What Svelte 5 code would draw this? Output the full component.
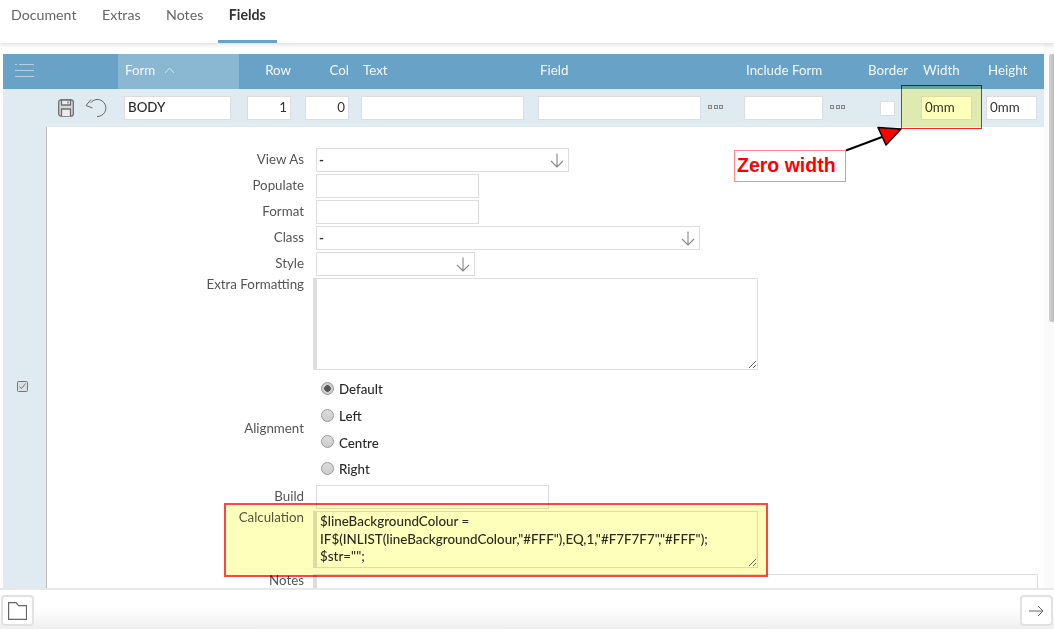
<script>
  const tabs = ['Document', 'Extras', 'Notes', 'Fields'];
  const radios = ['Default', 'Left', 'Centre', 'Right'];
</script>

<div class="page">
  <nav class="tabs">
    {#each tabs as t}
      <span class="tab" class:active={t === 'Fields'}>{t}</span>
    {/each}
  </nav>

  <main class="main">
    <div class="content">
      <div class="grid head">
        <div class="hcell menu">
          <svg width="19" height="13" viewBox="0 0 19 13" fill="none" stroke="#b5d0e3" stroke-width="1">
            <path d="M0 0.500h2M4 0.500h15M0 6.500h19M0 12.500h19" />
          </svg>
        </div>
        <div class="hcell sorted">Form
          <svg width="11" height="7" viewBox="0 0 11 7" fill="none" stroke="#d5e5ef" stroke-width="1"><path d="M1 6l4.500-5 4.500 5" /></svg>
        </div>
        <div class="hcell right">Row</div>
        <div class="hcell right">Col</div>
        <div class="hcell">Text</div>
        <div class="hcell">Field</div>
        <div class="hcell">Include Form</div>
        <div class="hcell">Border</div>
        <div class="hcell">Width</div>
        <div class="hcell">Height</div>
      </div>

      <div class="grid row">
        <div class="actions">
          <svg width="16" height="18" viewBox="0 0 16 18" fill="none" stroke="#6f6f6f" stroke-width="1.300">
            <rect x="0.700" y="1" width="14.600" height="16" rx="2" fill="#d4d9dc" />
            <path d="M3.500 1v5h9V1z" fill="#e8edf0" />
            <path d="M3.500 17v-7h9v7" fill="#e8edf0" />
            <path d="M10 2.500v2" />
          </svg>
          <svg width="22" height="20" viewBox="0 0 22 20" fill="none" stroke="#666" stroke-width="1">
            <path d="M5.500 5A8.500 8.500 0 1 1 12 18.500" />
            <path d="M6 1.500L1 7.500l6.500 2.500" />
          </svg>
        </div>
        <div class="cell"><input class="ctl strong" style="width:107px" value="BODY" /></div>
        <div class="cell"><input class="ctl num" value="1" /></div>
        <div class="cell"><input class="ctl num" value="0" /></div>
        <div class="cell"><input class="ctl" style="width:163px" /></div>
        <div class="cell"><input class="ctl" style="width:163px" /><span class="dots"><i></i><i></i><i></i></span></div>
        <div class="cell"><input class="ctl" style="width:79px" /><span class="dots"><i></i><i></i><i></i></span></div>
        <div class="cell checkcell"><span class="check"></span></div>
        <div class="cell"><input class="ctl mm" value="0mm" /></div>
        <div class="cell"><input class="ctl mm" value="0mm" /></div>
      </div>

      <div class="body">
        <aside class="side">
          <svg width="11" height="11" viewBox="0 0 11 11" fill="none" stroke="#777">
            <rect x="0.500" y="0.500" width="10" height="10" rx="1" fill="#d8e0e5" />
            <path d="M2.500 5.500l2 2 4-5" />
          </svg>
        </aside>
        <form class="form">
          <label class="lab">View As</label>
          <div class="sel" style="width:253px"><span>-</span>{@render arrow()}</div>

          <label class="lab">Populate</label>
          <input class="ctl" style="width:163px" />

          <label class="lab">Format</label>
          <input class="ctl" style="width:163px" />

          <label class="lab">Class</label>
          <div class="sel" style="width:384px"><span>-</span>{@render arrow()}</div>

          <label class="lab">Style</label>
          <div class="sel" style="width:159px"><span></span>{@render arrow()}</div>

          <label class="lab top">Extra Formatting</label>
          <textarea class="area extra"></textarea>

          <label class="lab align">Alignment</label>
          <div class="radios">
            {#each radios as r, i}
              <label class="radio"><input type="radio" name="al" checked={i === 0} />{r}</label>
            {/each}
          </div>

          <label class="lab">Build</label>
          <input class="ctl" style="width:233px" />

          <label class="lab top">Calculation</label>
          <textarea class="area calc" value={'$lineBackgroundColour =\nIF$(INLIST(lineBackgroundColour,"#FFF"),EQ,1,"#F7F7F7","#FFF");\n$str="";'}></textarea>

          <label class="lab top notes">Notes</label>
          <textarea class="area note"></textarea>
        </form>
      </div>
    </div>

    <div class="scroll"><div class="thumb"></div></div>

    <div class="mark width-mark"></div>
    <div class="mark calc-mark"></div>
    <svg class="pointer" width="70" height="30" viewBox="0 0 70 30" fill="none">
      <path d="M1 27.500L37 14" stroke="#000" stroke-width="2" />
      <path d="M33 4.500L56 6L41 22Z" fill="#f00" stroke="#000" stroke-width="1.500" stroke-linejoin="round" />
    </svg>
    <div class="callout">Zero width</div>
  </main>

  <footer class="foot">
    <button class="btn" aria-label="Open">
      <svg width="19" height="18" viewBox="0 0 19 18" fill="none" stroke="#666" stroke-width="1.200">
        <path d="M0.600 0.600h7.400l2.500 3h8v13.800H0.600z" />
      </svg>
    </button>
    <button class="btn" aria-label="Next">
      <svg width="15" height="12" viewBox="0 0 15 12" fill="none" stroke="#666" stroke-width="1">
        <path d="M0 6h14M9 1l5 5-5 5" />
      </svg>
    </button>
  </footer>
</div>

{#snippet arrow()}
  <svg class="arr" width="14" height="15" viewBox="0 0 14 15" fill="none" stroke="#888" stroke-width="1.100">
    <path d="M7 0.500v13.500M1 8l6 6 6-6" />
  </svg>
{/snippet}

<style>
  :global(body) { margin: 0; background: #fff; }
  .page {
    width: 1054px; height: 629px; overflow: hidden;
    display: flex; flex-direction: column;
    font-family: Lato, "Open Sans", sans-serif; font-size: 13.330px; color: #333;
  }
  .tabs {
    height: 43px; flex: none; box-sizing: border-box;
    display: flex; gap: 3.500px;
    box-shadow: 0 2px 4px rgba(0,0,0,.12);
    position: relative; z-index: 1;
  }
  .tab { padding: 6px 11px 0; font-size: 14.200px; color: #666; }
  .tab.active { color: #333; font-weight: 700; border-bottom: 3px solid #68a2c6; }

  .main { flex: 1; min-height: 0; position: relative; overflow: hidden; display: flex; padding: 11px 0 0 3px; }
  .content { width: 1041px; flex: none; }
  .grid {
    display: grid;
    grid-template-columns: 115px 121px 58px 58px 177px 206px 122px 55px 65px 64px;
  }
  .head { height: 35px; background: #68a2c6; color: #f4f8fb; align-items: stretch; }
  .hcell { display: flex; align-items: center; padding: 0 6px 3px 8px; gap: 9px; }
  .hcell.right { justify-content: flex-end; padding-left: 0; }
  .hcell.menu { padding-left: 12px; }
  .hcell.sorted { background: #8ab7d2; padding-left: 7px; }
  .row { height: 38px; background: #dfeaf1; align-items: center; }
  .actions { display: flex; justify-content: flex-end; align-items: center; gap: 11px; padding-right: 11px; }
  .cell { display: flex; align-items: center; padding: 0 6px; gap: 7px; }
  .cell:nth-child(3), .cell:nth-child(4) { justify-content: flex-end; }
  .checkcell { padding-left: 20px; }

  .ctl {
    box-sizing: border-box; height: 24px; padding: 0 3px 2px; margin: 0;
    border: 1px solid #ddd; background: #fff; outline: none;
    font: 13.330px Lato, sans-serif; color: #333; display: block;
  }
  .strong { font-weight: 500; color: #2a2a2a; }
  .num { width: 44px; text-align: right; }
  .mm { width: 51px; }
  .dots { display: flex; gap: 1.500px; transform: translateY(-1px); }
  .dots i { width: 4px; height: 4px; box-sizing: border-box; border: 1px solid #888; background: #ddd; }
  .check { width: 15px; height: 15px; background: #fff; border: 1px solid #ddd; box-sizing: border-box; }

  .body { display: flex; height: 480px; }
  .side {
    width: 44px; flex: none; box-sizing: border-box; background: #dfeaf1; border-right: 1px solid #bbb;
    display: flex; justify-content: center; padding: 254px 0 0 1px;
  }
  .side svg { margin-right: 6px; }
  .form {
    flex: 1; display: grid; grid-template-columns: 257px 1fr; column-gap: 12px; row-gap: 2px;
    align-content: start; padding-top: 21px;
  }
  .lab { text-align: right; color: #555; line-height: 22px; }
  .lab.top { line-height: 13px; }
  .lab.align { align-self: center; line-height: 14px; }
  .sel {
    box-sizing: border-box; height: 24px; border: 1px solid #ddd; padding: 0 3px 0 2px;
    display: flex; align-items: center; justify-content: space-between; background: #fff;
    font-weight: 700;
  }
  .arr { margin-right: 1px; }
  .area {
    display: block; box-sizing: border-box; margin: 0 0 0 -3px; padding: 1px 3px;
    border: 1px solid #ddd; border-left: 4px solid #ddd; background: #fff; outline: none;
    font: 13.400px/17.500px Lato, sans-serif; color: #2a2a2a;
  }
  .extra { width: 445px; height: 92px; }
  .calc { width: 445px; height: 57px; font-weight: 500; }
  .note { width: 725px; height: 60px; margin-top: 4px; resize: none; }
  .notes { padding-top: 4px; }
  .radios { display: flex; flex-direction: column; padding: 4px 0 0; height: 111px; box-sizing: border-box; }
  .radio { display: flex; flex: none; align-items: center; gap: 5px; height: 26.700px; color: #2a2a2a; font-weight: 500; }
  .radio input {
    appearance: none; width: 13px; height: 13px; margin: 0 0 2px 5px; border-radius: 50%;
    border: 1px solid #999; background: linear-gradient(#ddd, #ccc);
  }
  .radio input:checked { background: radial-gradient(circle, #555 0 3px, #ccc 3.500px); }

  .scroll { position: absolute; top: 0; bottom: 0; right: 0; width: 10px; background: #fafafa; }
  .thumb { height: 268px; width: 5px; margin: 11px 0 0 5px; background: linear-gradient(90deg, #d2d2d2, #bdbdbd); border-radius: 2px 0 0 2px; }

  .mark { position: absolute; mix-blend-mode: multiply; background: #ffffbc; box-sizing: border-box; border: 1px solid #f22; }
  .width-mark { left: 901px; top: 42px; width: 81px; height: 44px; }
  .calc-mark { left: 224px; top: 460px; width: 544px; height: 74px; border: 2px solid #f44; }
  .pointer { position: absolute; left: 845px; top: 80px; }
  .callout {
    position: absolute; left: 734px; top: 107px; width: 112px; height: 32px; box-sizing: border-box;
    border: 1px solid #f88; background: #fff; padding-left: 2px;
    font: 700 19.500px/29px "Liberation Sans", sans-serif; color: #f00;
  }

  .foot {
    height: 41px; flex: none; box-sizing: border-box; border-top: 2px solid #e8e8e8;
    background: linear-gradient(#fff 50%, #eee);
    display: flex; justify-content: space-between; align-items: center; padding: 2px 1px 0 1px;
    position: relative;
  }
  .btn {
    width: 33px; height: 31px; padding: 0; background: #fff; border: 2px solid #e2e2e2; border-radius: 4px;
    display: flex; align-items: center; justify-content: center;
  }
</style>
